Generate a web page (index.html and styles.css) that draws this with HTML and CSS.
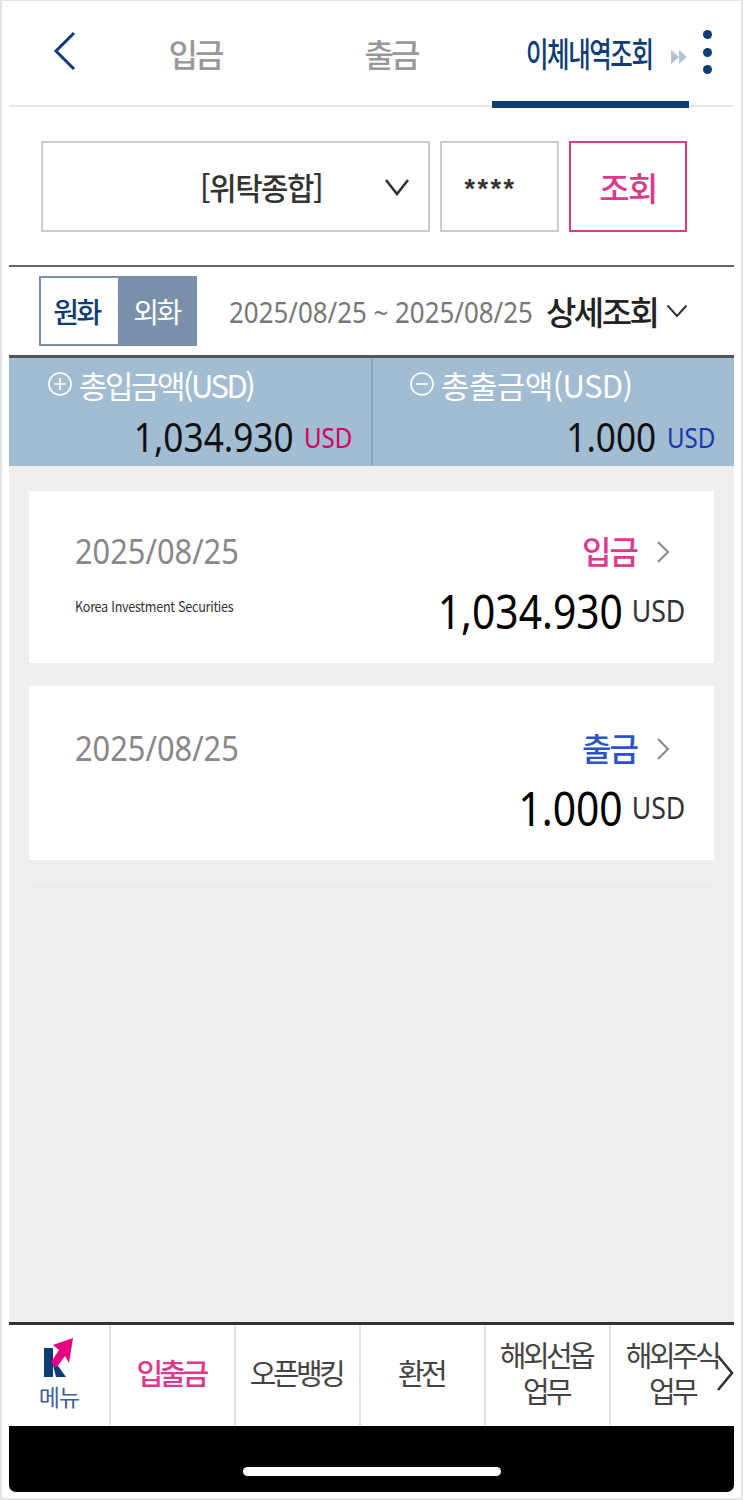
FILE: index.html
```html
<!DOCTYPE html>
<html lang="ko">
<head>
    <meta charset="UTF-8">
    <meta name="viewport" content="width=device-width, initial-scale=1.0">
    <title>이체내역조회</title>
    <link rel="stylesheet" href="styles.css">
</head>
<body>
    <div class="screen">
        <div class="tabs">
            <button class="back-button" aria-label="뒤로">
                <svg width="24" height="40" viewBox="0 0 24 40"><path d="M21 2 L3 20 L21 38" fill="none" stroke="#0e3c74" stroke-width="3"/></svg>
            </button>
            <div class="tab tab-in">입금</div>
            <div class="tab tab-out">출금</div>
            <div class="tab tab-history active"><span>이체내역조회</span></div>
            <svg class="tab-more" width="17" height="16" viewBox="0 0 17 16"><path d="M0 1 L8 8 L0 15Z M8 1 L16 8 L8 15Z" fill="#b4c2d2"/></svg>
            <div class="kebab"><i></i><i></i><i></i></div>
        </div>

        <div class="search">
            <div class="account-select">
                <span class="account-name">[위탁종합]</span>
                <svg width="26" height="18" viewBox="0 0 26 18"><path d="M2 2 L13 16 L24 2" fill="none" stroke="#333" stroke-width="2.6"/></svg>
            </div>
            <div class="password-box">****</div>
            <button class="search-button">조회</button>
        </div>

        <div class="filter">
            <div class="currency">
                <div class="currency-krw">원화</div>
                <div class="currency-usd">외화</div>
            </div>
            <div class="date-range">2025/08/25 ~ 2025/08/25</div>
            <div class="detail-toggle">
                <span>상세조회</span>
                <svg width="22" height="14" viewBox="0 0 22 14"><path d="M1.500 1.500 L11 12 L20.500 1.500" fill="none" stroke="#333" stroke-width="2"/></svg>
            </div>
        </div>

        <div class="summary">
            <div class="summary-col">
                <div class="summary-label">
                    <svg width="26" height="26" viewBox="0 0 26 26"><circle cx="13" cy="13" r="11" fill="none" stroke="#fff" stroke-width="1.600"/><path d="M7 13 H19 M13 7 V19" stroke="#fff" stroke-width="1.600"/></svg>
                    <span>총입금액(USD)</span>
                </div>
                <div class="summary-amount"><span class="num">1,034.930</span><span class="unit unit-in">USD</span></div>
            </div>
            <div class="summary-col">
                <div class="summary-label">
                    <svg width="26" height="26" viewBox="0 0 26 26"><circle cx="13" cy="13" r="11" fill="none" stroke="#fff" stroke-width="1.600"/><path d="M7 13 H19" stroke="#fff" stroke-width="1.600"/></svg>
                    <span>총출금액(USD)</span>
                </div>
                <div class="summary-amount"><span class="num">1.000</span><span class="unit unit-out">USD</span></div>
            </div>
        </div>

        <div class="list">
            <div class="card">
                <div class="card-row">
                    <div class="card-date">2025/08/25</div>
                    <div class="card-type type-in">입금</div>
                    <svg class="card-arrow" width="14" height="24" viewBox="0 0 14 24"><path d="M2 2 L12 12 L2 22" fill="none" stroke="#888" stroke-width="2"/></svg>
                </div>
                <div class="card-row card-row-bottom">
                    <div class="card-memo">Korea Investment Securities</div>
                    <div class="card-amount"><span class="num">1,034.930</span><span class="unit">USD</span></div>
                </div>
            </div>
            <div class="card">
                <div class="card-row">
                    <div class="card-date">2025/08/25</div>
                    <div class="card-type type-out">출금</div>
                    <svg class="card-arrow" width="14" height="24" viewBox="0 0 14 24"><path d="M2 2 L12 12 L2 22" fill="none" stroke="#888" stroke-width="2"/></svg>
                </div>
                <div class="card-row card-row-bottom">
                    <div class="card-memo"></div>
                    <div class="card-amount"><span class="num">1.000</span><span class="unit">USD</span></div>
                </div>
            </div>
            <div class="list-end"></div>
        </div>

        <div class="bottom-nav">
            <div class="nav-menu">
                <svg width="30" height="42" viewBox="0 0 30 42">
                    <path d="M0 10 H9 V39 H0Z M9 27 L12 25 L22 39 H12Z" fill="#0e3c74"/>
                    <path d="M29 0 L9 7 L15 12 L7 24 L12 30 L21 18 L25 25Z" fill="#e5007f"/>
                </svg>
                <span>메뉴</span>
            </div>
            <div class="nav-item active">입출금</div>
            <div class="nav-item">오픈뱅킹</div>
            <div class="nav-item">환전</div>
            <div class="nav-item">해외선옵<br>업무</div>
            <div class="nav-item">해외주식<br>업무</div>
            <svg class="nav-next" width="18" height="38" viewBox="0 0 18 38"><path d="M2 2 L16 19 L2 36" fill="none" stroke="#333" stroke-width="2.600"/></svg>
        </div>

        <div class="home-bar"><div class="home-pill"></div></div>
    </div>
</body>
</html>
```

FILE: styles.css
```css
/* page frame */
html, body {
    margin: 0;
    padding: 0;
    background-color: #fff;
}
body {
    width: 743px;
    height: 1500px;
    overflow: hidden;
    font-family: "Noto Sans CJK KR", "Noto Sans", sans-serif;
    color: #222;
}
button {
    font-family: inherit;
    background: none;
    padding: 0;
    border: none;
}
.screen {
    box-sizing: border-box;
    width: 743px;
    height: 1500px;
    padding: 0 7px 6px 7px;
    border: 1px solid #e4e4e4;
    border-width: 1px 2px 2px 2px;
    display: flex;
    flex-direction: column;
}

/* top tabs */
.tabs {
    height: 106px;
    flex: none;
    border-bottom: 2px solid #e6e6e6;
    box-sizing: border-box;
    display: flex;
    position: relative;
}
.back-button {
    width: 90px;
    height: 104px;
    padding: 0 0 0 44px;
    text-align: left;
    flex: none;
}
.tab {
    font-size: 32px;
    letter-spacing: -3px;
    color: #999;
    font-weight: 500;
    line-height: 104px;
    text-align: center;
    flex: none;
}
.tab-in {
    width: 128px;
    margin-left: 32px;
}
.tab-out {
    width: 264px;
}
.tab-history {
    position: absolute;
    left: 483px;
    top: 0;
    width: 197px;
    height: 107px;
    box-sizing: border-box;
    border-bottom: 7px solid #0e3c74;
    color: #0e3c74;
    text-align: left;
}
.tab-history span {
    display: inline-block;
    font-size: 34px;
    letter-spacing: -2px;
    transform: scaleX(.72);
    transform-origin: left center;
    margin-left: 34px;
    white-space: nowrap;
}
.tab-more {
    position: absolute;
    left: 662px;
    top: 48px;
}
.kebab {
    position: absolute;
    left: 694px;
    top: 29px;
    display: flex;
    flex-direction: column;
    gap: 8.500px;
}
.kebab i {
    display: block;
    width: 9px;
    height: 9px;
    border-radius: 50%;
    background-color: #0e3c74;
}

/* account search */
.search {
    flex: none;
    height: 160px;
    box-sizing: border-box;
    padding: 34px 45px 0 32px;
    border-bottom: 2px solid #666;
    display: flex;
    gap: 10px;
    align-items: flex-start;
}
.account-select, .password-box, .search-button {
    box-sizing: border-box;
    height: 91px;
    border: 2px solid #ccc;
    display: flex;
    align-items: center;
}
.account-select {
    width: 389px;
    justify-content: flex-end;
    padding-right: 18px;
    gap: 62px;
}
.account-name {
    font-size: 31px;
    font-weight: 500;
    color: #333;
    letter-spacing: -1.500px;
    transform: scaleX(.96);
    transform-origin: right center;
}
.password-box {
    width: 119px;
    font-family: "Liberation Sans", sans-serif;
    font-weight: 700;
    font-size: 27px;
    letter-spacing: 2.500px;
    justify-content: center;
    padding: 6px 18px 0 0;
    color: #333;
}
.search-button {
    width: 118px;
    border-color: #dc3a8c;
    color: #dc3a8c;
    justify-content: center;
    font-size: 33px;
    font-weight: 500;
    letter-spacing: -1.500px;
}

/* currency and date filter */
.filter {
    flex: none;
    height: 88px;
    box-sizing: border-box;
    display: flex;
    align-items: center;
    padding: 0 0 0 30px;
}
.currency {
    width: 158px;
    height: 70px;
    box-sizing: border-box;
    border: 2px solid #7a8fa9;
    display: flex;
    flex: none;
}
.currency-krw, .currency-usd {
    width: 50%;
    box-sizing: border-box;
    font-size: 28px;
    text-align: center;
    line-height: 66px;
    letter-spacing: -2.500px;
}
.currency-krw {
    color: #0e3c74;
    font-weight: 500;
    padding-right: 6px;
}
.currency-usd {
    background-color: #7a8fa9;
    color: #fff;
}
.date-range {
    margin: 0 0 0 32px;
    width: 303px;
    flex: none;
    font-size: 29px;
    color: #777;
    white-space: nowrap;
    transform: scaleX(.893);
    transform-origin: left center;
    font-family: "Noto Sans", sans-serif;
}
.detail-toggle {
    margin: 0 0 0 14px;
    display: flex;
    align-items: center;
    gap: 10px;
    flex: none;
}
.detail-toggle span {
    font-size: 33px;
    font-weight: 500;
    color: #222;
    letter-spacing: -2.500px;
    width: 110px;
    white-space: nowrap;
}

/* totals */
.summary {
    flex: none;
    height: 111px;
    box-sizing: border-box;
    background-color: #a2bcd1;
    border-top: 3px solid #555;
    display: flex;
}
.summary-col {
    width: 364px;
    box-sizing: border-box;
    padding: 3px 19px 0 0;
}
.summary-col:first-child {
    border-right: 2px solid #8ca8bf;
}
.summary-col:last-child {
    width: 361px;
}
.summary-label {
    display: flex;
    align-items: center;
    gap: 6px;
    font-size: 31px;
    color: #fff;
    padding-left: 38px;
    height: 46px;
    letter-spacing: -2.500px;
}
.summary-col:last-child .summary-label {
    padding-left: 36px;
    letter-spacing: -.600px;
}
.summary-amount {
    display: flex;
    justify-content: flex-end;
    align-items: center;
    gap: 11px;
    line-height: 50px;
    margin-top: 5px;
}
.num {
    font-family: "Noto Sans", sans-serif;
    font-size: 40px;
    color: #111;
    display: inline-block;
    transform: scaleX(.88);
    transform-origin: right center;
}
.unit {
    font-family: "Noto Sans", sans-serif;
    font-size: 28px;
    display: inline-block;
    transform: scaleX(.86);
    transform-origin: right center;
    margin-left: -9px;
}
.unit-in {
    color: #d1005e;
}
.unit-out {
    color: #1236b4;
}

/* transaction list */
.list {
    flex: 1;
    background-color: #eee;
    padding: 25px 20px 0 20px;
    display: flex;
    flex-direction: column;
    gap: 23px;
}
.card {
    background-color: #fff;
    box-sizing: border-box;
    height: 172px;
    padding: 36px 44px 0 46px;
}
.card + .card {
    height: 174px;
    padding-top: 38px;
}
.list-end {
    height: 6px;
    background-color: #ececec;
}
.card-row {
    display: flex;
    align-items: center;
    height: 46px;
}
.card-row-bottom {
    justify-content: space-between;
    margin: 14px -16px 0 0;
}
.card-date {
    font-family: "Noto Sans", sans-serif;
    font-size: 35px;
    color: #888;
    flex: 1;
    white-space: nowrap;
    transform: scaleX(.88);
    transform-origin: left center;
}
.card-type {
    font-size: 32px;
    font-weight: 500;
    letter-spacing: -2px;
    margin-right: 19px;
}
.card-arrow {
    margin-top: 4px;
}
.type-in {
    color: #dc3a8c;
}
.type-out {
    color: #2b55c5;
}
.card-memo {
    font-size: 14px;
    color: #333;
    letter-spacing: -.3px;
    margin-top: -8px;
    white-space: nowrap;
    transform: scaleX(.9);
    transform-origin: left center;
}
.card-amount {
    display: flex;
    align-items: center;
    gap: 11px;
}
.card-amount .num {
    font-size: 48px;
    color: #000;
    transform: scaleX(.85);
}
.card-amount .unit {
    color: #333;
    font-size: 30px;
    transform: scaleX(.89);
    margin-right: 1px;
}

/* bottom menu */
.bottom-nav {
    flex: none;
    height: 104px;
    box-sizing: border-box;
    border-top: 3px solid #333;
    display: flex;
    position: relative;
    overflow: hidden;
}
.nav-menu {
    width: 102px;
    flex: none;
    box-sizing: border-box;
    border-right: 2px solid #e2e2e2;
    display: flex;
    flex-direction: column;
    align-items: center;
    padding-top: 13px;
    gap: 2px;
    font-size: 23px;
    line-height: 28px;
    color: #3f6195;
    letter-spacing: -1px;
}
.nav-item {
    width: 125px;
    flex: none;
    box-sizing: border-box;
    border-right: 2px solid #e2e2e2;
    padding: 0 3px 2px 0;
    display: flex;
    align-items: center;
    justify-content: center;
    text-align: center;
    font-family: "Liberation Sans", "Noto Sans CJK KR", sans-serif;
    font-size: 29px;
    line-height: 36px;
    color: #444;
    letter-spacing: -3.600px;
    white-space: nowrap;
}
.nav-item:last-of-type {
    border-right: none;
}
.nav-item.active {
    color: #dc3a8c;
    font-weight: 500;
}
.nav-next {
    position: absolute;
    right: 0;
    top: 29px;
}

/* phone home indicator */
.home-bar {
    flex: none;
    height: 66px;
    background-color: #000;
    border-radius: 0 0 7px 7px;
    position: relative;
}
.home-pill {
    position: absolute;
    left: 234px;
    top: 41px;
    width: 258px;
    height: 9px;
    border-radius: 5px;
    background-color: #fff;
}
```
